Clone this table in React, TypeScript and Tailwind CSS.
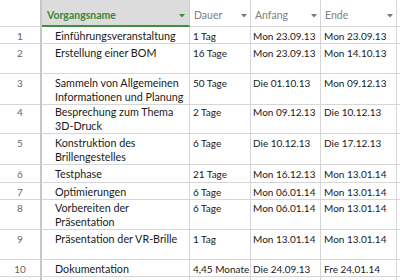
const rows = [
  { n: "1", name: ["Einführungsveranstaltung"], dauer: "1 Tag", anfang: "Mon 23.09.13", ende: "Mon 23.09.13", h: "h-[17px]" },
  { n: "2", name: ["Erstellung einer BOM"], dauer: "16 Tage", anfang: "Mon 23.09.13", ende: "Mon 14.10.13", h: "h-[30px]" },
  { n: "3", name: ["Sammeln von Allgemeinen", "Informationen und Planung"], dauer: "50 Tage", anfang: "Die 01.10.13", ende: "Mon 09.12.13", h: "h-[29px]" },
  { n: "4", name: ["Besprechung zum Thema", "3D-Druck"], dauer: "2 Tage", anfang: "Mon 09.12.13", ende: "Die 10.12.13", h: "h-[31px]" },
  { n: "5", name: ["Konstruktion des", "Brillengestelles"], dauer: "6 Tage", anfang: "Die 10.12.13", ende: "Die 17.12.13", h: "h-[31px]" },
  { n: "6", name: ["Testphase"], dauer: "21 Tage", anfang: "Mon 16.12.13", ende: "Mon 13.01.14", h: "h-[18px]" },
  { n: "7", name: ["Optimierungen"], dauer: "6 Tage", anfang: "Mon 06.01.14", ende: "Mon 13.01.14", h: "h-[16px]" },
  { n: "8", name: ["Vorbereiten der", "Präsentation"], dauer: "6 Tage", anfang: "Mon 06.01.14", ende: "Mon 13.01.14", h: "h-[31px]" },
  { n: "9", name: ["Präsentation der VR-Brille"], dauer: "1 Tag", anfang: "Mon 13.01.14", ende: "Mon 13.01.14", h: "h-[30px]" },
  { n: "10", name: ["Dokumentation"], dauer: "4,45 Monate", anfang: "Die 24.09.13", ende: "Fre 24.01.14", h: "h-[17px]" },
  { n: "", name: [""], dauer: "", anfang: "", ende: "", h: "h-[17px]" },
];

function Arrow({ green }: { green?: boolean }) {
  return (
    <svg width="6" height="4" viewBox="0 0 6 4" className="shrink-0">
      <path d="M0 0h6L3 3.5z" fill={green ? "#3f8f3f" : "#7a7a7a"} />
    </svg>
  );
}

const cols = "grid grid-cols-[42px_148px_61px_70px_76px_1fr]";

export default function App() {
  return (
    <div className="h-[280px] w-[400px] overflow-hidden bg-white text-[10px] leading-[14px] text-[#1a1a1a] [font-family:Lato,'Liberation_Sans',sans-serif]">
      <div className={`${cols} h-[27px]`}>
        <div className="border-r-2 border-b border-[#c6c6c6] border-b-[#d6d6d6]" />
        <div className="flex items-end justify-between border-r border-b-2 border-r-[#d0d0d0] border-b-[#3f8f3f] bg-[#dcdcdc] pb-[3px] pl-[5px] pr-[4px]">
          <span className="text-[10.5px] font-bold text-[#3a873a]">Vorgangsname</span>
          <span className="mb-[4px]"><Arrow green /></span>
        </div>
        {["Dauer", "Anfang", "Ende"].map((t) => (
          <div key={t} className="flex items-end justify-between border-r border-b border-[#d6d6d6] pb-[4px] pl-[4px] pr-[3px]">
            <span className="text-[10.5px] text-[#808080]">{t}</span>
            <span className="mb-[4px]"><Arrow /></span>
          </div>
        ))}
        <div className="border-b border-[#d6d6d6]" />
      </div>
      {rows.map((r, i) => (
        <div key={i} className={`${cols} ${r.h}`}>
          <div className="border-r-2 border-b border-[#c6c6c6] border-b-[#d6d6d6] pt-[2px] text-center text-[#666]">{r.n}</div>
          <div className="border-r border-b border-[#d6d6d6] pt-[2px] pl-[13px] text-[10.75px] whitespace-nowrap">
            {r.name.map((l, j) => (
              <div key={j}>{l}</div>
            ))}
          </div>
          <div className="border-r border-b border-[#d6d6d6] pt-[2px] pl-[3px] whitespace-nowrap">{r.dauer}</div>
          <div className="border-r border-b border-[#d6d6d6] pt-[2px] pl-[2px] whitespace-nowrap">{r.anfang}</div>
          <div className="border-r border-b border-[#d6d6d6] pt-[2px] pl-[3px] whitespace-nowrap">{r.ende}</div>
          <div className="border-b border-[#d6d6d6]" />
        </div>
      ))}
    </div>
  );
}
